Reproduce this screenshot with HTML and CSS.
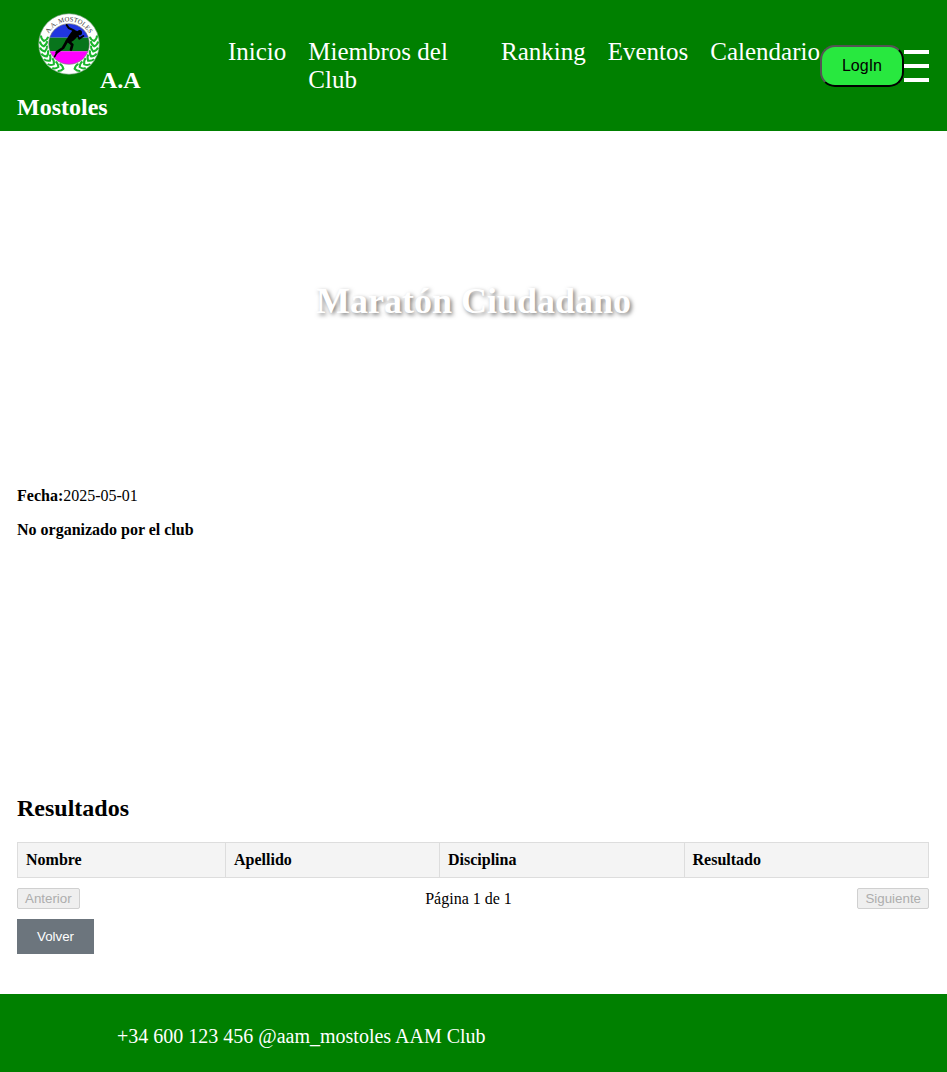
FILE: index.html
```html
<!DOCTYPE html>
<html lang="es">
<head>
<meta charset="utf-8">
<meta name="viewport" content="width=device-width, initial-scale=1">
<title>Maratón Ciudadano</title>
<link rel="stylesheet" href="styles.css">
</head>
<body>
<header class="header">
  <div class="brand">
    <svg class="brand-logo" viewBox="24 23 186 186" role="img" aria-label="Escudo A.A. Mostoles">
      <defs>
        <clipPath id="disc"><circle cx="117" cy="116" r="61"/></clipPath>
        <path id="arc" d="M49 116 A68 68 0 0 1 185 116"/>
        <path id="leaf" d="M30 104 Q31 113 41 119 Q51 113 52 104"/>
        <g id="laurel" fill="none" stroke="#1cb62e" stroke-width="6">
          <use href="#leaf" transform="rotate(9 117 116)"/>
          <use href="#leaf" transform="rotate(-3 117 116)"/>
          <use href="#leaf" transform="rotate(-15 117 116)"/>
          <use href="#leaf" transform="rotate(-27 117 116)"/>
          <use href="#leaf" transform="rotate(-39 117 116)"/>
          <use href="#leaf" transform="rotate(-51 117 116)"/>
          <use href="#leaf" transform="rotate(-63 117 116)"/>
          <use href="#leaf" transform="rotate(-75 117 116)"/>
        </g>
      </defs>
      <circle cx="117" cy="116" r="91" fill="#fff" stroke="#6f9f78" stroke-width="2"/>
      <g clip-path="url(#disc)">
        <rect x="56" y="55" width="122" height="42" fill="#2136e0"/>
        <rect x="56" y="97" width="122" height="41" fill="#08751c"/>
        <rect x="56" y="138" width="122" height="40" fill="#f0f"/>
      </g>
      <circle cx="117" cy="116" r="61" fill="none" stroke="#777" stroke-width="2"/>
      <use href="#laurel"/>
      <use href="#laurel" transform="translate(234 0) scale(-1 1)"/>
      <ellipse cx="149" cy="82" rx="7" ry="8"/>
      <path d="M129 73 L144 78 L146 91 L130 106 L117 114 L106 108 L117 90 Z"/>
      <g fill="none" stroke="#000" stroke-linecap="round" stroke-linejoin="round">
        <path d="M110 59 L116 68 L133 76" stroke-width="6"/>
        <path d="M140 87 L148 100 L160 92" stroke-width="6"/>
        <path d="M114 106 L127 118 L123 133" stroke-width="8"/>
        <path d="M111 107 L99 128 L80 141" stroke-width="8"/>
        <path d="M81 141 L74 154" stroke-width="5"/>
      </g>
      <text class="brand-ring"><textPath href="#arc" startOffset="50%">A.A. MOSTOLES</textPath></text>
    </svg>A.A Mostoles
  </div>
  <nav class="nav">
    <a href="#">Inicio</a>
    <a href="#">Miembros del Club</a>
    <a href="#">Ranking</a>
    <a href="#">Eventos</a>
    <a href="#">Calendario</a>
  </nav>
  <button class="login" type="button">LogIn</button>
  <button class="menu" type="button" aria-label="Menú"><span></span><span></span><span></span></button>
</header>
<section class="hero">
  <h1>Maratón Ciudadano</h1>
</section>
<main class="content">
  <section class="details">
    <p><strong>Fecha:</strong>2025-05-01</p>
    <p><strong>No organizado por el club</strong></p>
  </section>
  <h2>Resultados</h2>
  <table class="results">
    <thead>
      <tr><th>Nombre</th><th>Apellido</th><th>Disciplina</th><th>Resultado</th></tr>
    </thead>
  </table>
  <div class="pagination">
    <button type="button" disabled>Anterior</button>
    <span>Página 1 de 1</span>
    <button type="button" disabled>Siguiente</button>
  </div>
  <button class="back" type="button">Volver</button>
</main>
<footer class="footer">+34 600 123 456 @aam_mostoles AAM Club</footer>
</body>
</html>
```
FILE: styles.css
```css
* {
  box-sizing: border-box;
}

body {
  margin: 0;
  background: #fff;
  color: #000;
  font-family: "Liberation Serif", "Times New Roman", serif;
  font-size: 16px;
  line-height: 18px;
}

button {
  font-family: "Liberation Sans", Arial, sans-serif;
}

.header {
  display: flex;
  align-items: center;
  padding: 10px 18px 10px 17px;
  background: #008000;
  color: #fff;
}

.brand {
  flex: 0 0 171px;
  font-size: 24px;
  font-weight: bold;
  line-height: 27px;
}

.brand-logo {
  width: 62px;
  height: 62px;
  margin: 3px 0 13px 21px;
}

.brand-ring {
  fill: #333;
  font-size: 20px;
  font-weight: normal;
  text-anchor: middle;
}

.nav {
  display: flex;
  flex: 1;
  gap: 22px;
  margin-left: 40px;
  font-size: 25px;
  line-height: 28px;
}

.nav a {
  color: #fff;
  text-decoration: none;
}

.login {
  padding: 10px 20px;
  border: 2px outset #000;
  border-radius: 15px;
  background: #28e83f;
  color: #000;
  font-size: 16px;
}

.menu {
  display: flex;
  flex-direction: column;
  gap: 10px;
  padding: 0;
  border: 0;
  background: none;
}

.menu span {
  width: 25px;
  height: 4px;
  background: #fff;
}

.hero {
  display: flex;
  align-items: center;
  justify-content: center;
  min-height: 340px;
}

.hero h1 {
  margin: 0;
  color: #fff;
  font-size: 36px;
  line-height: 40px;
  text-shadow: 2px 2px 4px rgba(0, 0, 0, 0.5);
}

.content {
  padding: 0 18px 40px 17px;
}

.details {
  display: flow-root;
  min-height: 304px;
}

.details p {
  margin: 16px 0;
}

h2 {
  margin: 20px 0;
  font-size: 24px;
  line-height: 27px;
}

.results {
  width: 100%;
  border-collapse: collapse;
}

.results th {
  padding: 8px;
  border: 1px solid #ddd;
  background: #f4f4f4;
  text-align: left;
}

.pagination {
  display: flex;
  align-items: center;
  justify-content: space-between;
  margin: 10px 0;
}

.pagination button {
  padding: 2px 7px;
  border: 1px solid #d0d0d0;
  border-radius: 2px;
  background: #efefef;
  color: #adadad;
}

.back {
  display: block;
  padding: 10px 20px;
  border: 0;
  background: #6c757d;
  color: #fff;
}

.footer {
  padding: 31px 17px 24px 117px;
  background: #008000;
  color: #fff;
  font-size: 20px;
  line-height: 23px;
}
```
